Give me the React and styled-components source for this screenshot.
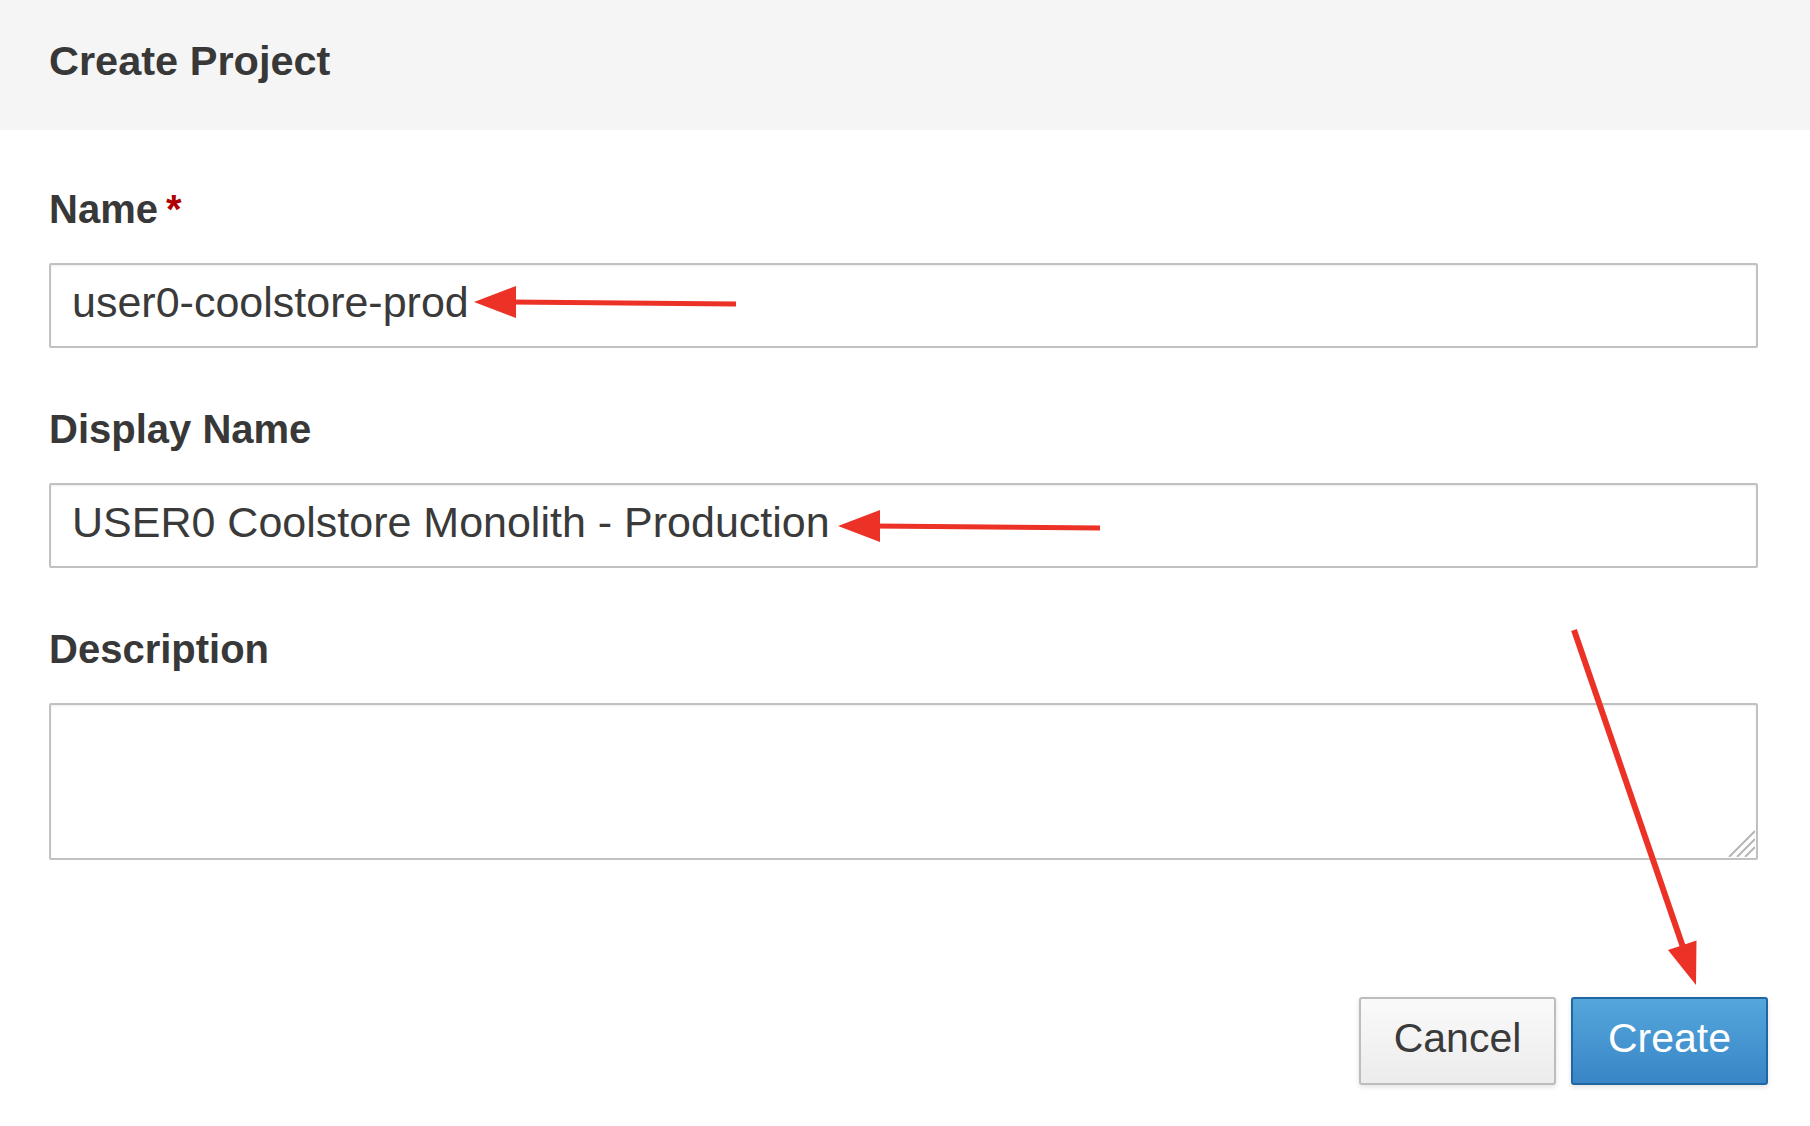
import styled, { createGlobalStyle } from "styled-components";

const GlobalStyle = createGlobalStyle`
  html, body {
    margin: 0;
    padding: 0;
    background: #fff;
  }
  * {
    box-sizing: border-box;
  }
`;

const Page = styled.div`
  position: relative;
  width: 1810px;
  height: 1126px;
  overflow: hidden;
  background: #fff;
  font-family: "Liberation Sans", Arial, sans-serif;
  color: #363636;
`;

const Header = styled.div`
  height: 130px;
  background: #f5f5f5;
  padding: 36px 0 0 49px;
`;

const Title = styled.h1`
  margin: 0;
  font-size: 41.5px;
  line-height: 50px;
  font-weight: 700;
  color: #383838;
`;

const Form = styled.form`
  display: flex;
  flex-direction: column;
  gap: 57px;
  padding: 55px 52px 0 49px;
`;

const Field = styled.div`
  display: flex;
  flex-direction: column;
`;

const Label = styled.label`
  font-size: 40px;
  line-height: 48px;
  font-weight: 700;
  color: #383838;
  margin-bottom: 30px;
`;

const Required = styled.span`
  color: #b00000;
  margin-left: 8px;
`;

const TextInput = styled.input`
  width: 100%;
  height: 85px;
  border: 2px solid #c1c1c1;
  border-radius: 2px;
  box-shadow: inset 0 1px 2px rgba(0, 0, 0, 0.08);
  padding: 0 20px 6px 21px;
  font-family: "Liberation Sans", Arial, sans-serif;
  font-size: 43px;
  color: #3a3a3a;
  outline: none;
  background: #fff;
`;

const AreaWrap = styled.div`
  position: relative;
`;

const TextArea = styled.textarea`
  display: block;
  width: 100%;
  height: 157px;
  border: 2px solid #c1c1c1;
  border-radius: 2px;
  box-shadow: inset 0 1px 2px rgba(0, 0, 0, 0.08);
  padding: 14px 21px;
  font-family: "Liberation Sans", Arial, sans-serif;
  font-size: 43px;
  color: #3a3a3a;
  outline: none;
  resize: none;
  background: #fff;
`;

const Grip = styled.svg`
  position: absolute;
  right: 3px;
  bottom: 3px;
  pointer-events: none;
`;

const Footer = styled.div`
  display: flex;
  justify-content: flex-end;
  gap: 15px;
  margin-top: 137px;
  padding-right: 42px;
`;

const Button = styled.button`
  width: 197px;
  height: 88px;
  padding: 0 0 6px;
  border-radius: 3px;
  font-family: "Liberation Sans", Arial, sans-serif;
  font-size: 41px;
  cursor: pointer;
  box-shadow: 0 2px 5px rgba(0, 0, 0, 0.12);
  border: 2px solid ${(p) => (p.$primary ? "#1f66a2" : "#bdbdbd")};
  color: ${(p) => (p.$primary ? "#fff" : "#3a3a3a")};
  background: ${(p) =>
    p.$primary
      ? "linear-gradient(to bottom, #54a6db 0%, #3985c6 100%)"
      : "linear-gradient(to bottom, #fafafa 0%, #ececec 100%)"};
`;

const Annotations = styled.svg`
  position: absolute;
  left: 0;
  top: 0;
  pointer-events: none;
`;

const RED = "#ec3226";

export default function App() {
  return (
    <>
      <GlobalStyle />
      <Page>
        <Header>
          <Title>Create Project</Title>
        </Header>
        <Form onSubmit={(e) => e.preventDefault()}>
          <Field>
            <Label>
              Name<Required>*</Required>
            </Label>
            <TextInput readOnly value="user0-coolstore-prod" />
          </Field>
          <Field>
            <Label>Display Name</Label>
            <TextInput readOnly value="USER0 Coolstore Monolith - Production" />
          </Field>
          <Field>
            <Label>Description</Label>
            <AreaWrap>
              <TextArea readOnly value="" />
              <Grip width="28" height="28" viewBox="0 0 28 28">
                <g stroke="#b5b5b5" strokeWidth="2">
                  <line x1="28" y1="2" x2="2" y2="28" />
                  <line x1="28" y1="10" x2="10" y2="28" />
                  <line x1="28" y1="18" x2="18" y2="28" />
                </g>
              </Grip>
            </AreaWrap>
          </Field>
        </Form>
        <Footer>
          <Button type="button">Cancel</Button>
          <Button type="button" $primary>
            Create
          </Button>
        </Footer>
        <Annotations width="1810" height="1126" viewBox="0 0 1810 1126">
          <line x1="736" y1="304" x2="510" y2="302" stroke={RED} strokeWidth="5" />
          <polygon points="474,302 516,286 516,318" fill={RED} />
          <line x1="1100" y1="528" x2="874" y2="526" stroke={RED} strokeWidth="5" />
          <polygon points="838,526 880,510 880,542" fill={RED} />
          <line x1="1574" y1="630" x2="1684" y2="950" stroke={RED} strokeWidth="6" />
          <polygon points="1696,985 1668,950 1696.5,940.4" fill={RED} />
        </Annotations>
      </Page>
    </>
  );
}
